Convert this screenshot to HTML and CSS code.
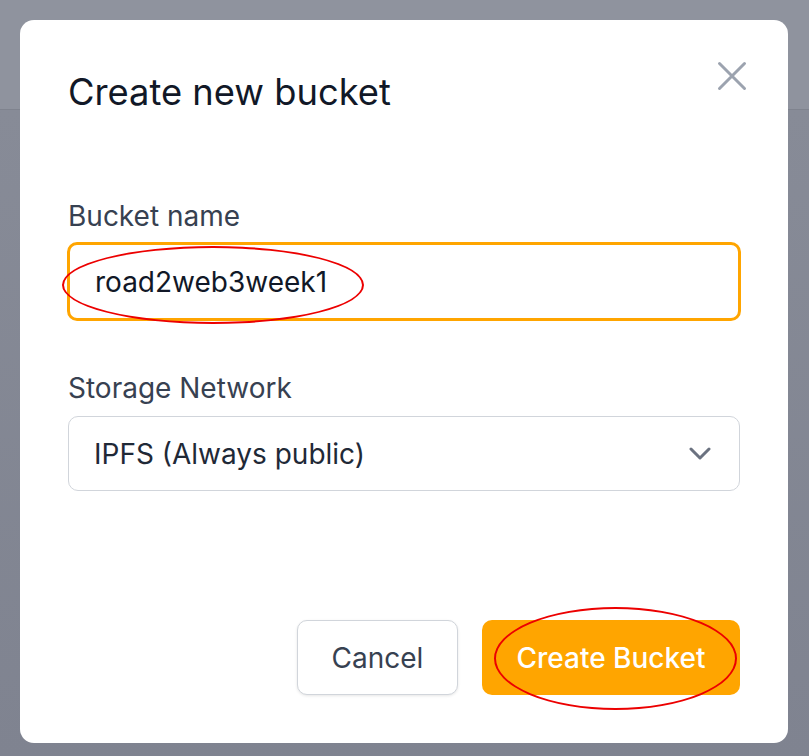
FILE: index.html
```html
<!DOCTYPE html>
<html>
<head>
<meta charset="utf-8">
<link rel="stylesheet" href="styles.css">
</head>
<body>
<div class="backdrop">
  <div class="bg-header"></div>
  <div class="bg-main"></div>
</div>
<div class="overlay">
  <div class="modal">
    <div class="modal-head">
      <h2 class="title">Create new bucket</h2>
      <button class="close" aria-label="Close">
        <svg width="30" height="30" viewBox="0 0 30 30"><path d="M2.5 2.5 L27.5 27.5 M27.5 2.5 L2.5 27.5" stroke="#9ca3af" stroke-width="3" stroke-linecap="round" fill="none"/></svg>
      </button>
    </div>
    <div class="field field-name">
      <label class="label">Bucket name</label>
      <div class="input input-focus">road2web3week1
        <span class="mark mark-input"></span>
      </div>
    </div>
    <div class="field field-net">
      <label class="label">Storage Network</label>
      <div class="input select">
        <span>IPFS (Always public)</span>
        <svg width="22" height="14" viewBox="0 0 22 14"><path d="M2 2 L11 11 L20 2" stroke="#6b7280" stroke-width="3" stroke-linecap="round" stroke-linejoin="round" fill="none"/></svg>
      </div>
    </div>
    <div class="actions">
      <button class="btn btn-cancel">Cancel</button>
      <button class="btn btn-create">Create Bucket<span class="mark mark-btn"></span></button>
    </div>
  </div>
</div>
</body>
</html>
```
FILE: styles.css
```css
* { box-sizing: border-box; }
html, body { margin: 0; padding: 0; }
body {
  width: 809px;
  height: 756px;
  overflow: hidden;
  font-family: Inter, "Noto Sans", sans-serif;
  background: #878b97;
}
.backdrop { display: flex; flex-direction: column; height: 100%; }
.bg-header { height: 110px; background: #8f939e; border-bottom: 1px solid #7f838e; }
.bg-main { flex: 1; background: linear-gradient(#878b97, #7f8390); }
.overlay {
  position: fixed;
  inset: 0;
  padding: 20px 21px 13px 20px;
  display: flex;
}
.modal {
  flex: 1;
  background: #fff;
  border-radius: 14px;
  padding: 0 48px 0 48px;
  display: flex;
  flex-direction: column;
}
.modal-head {
  display: flex;
  justify-content: space-between;
  align-items: flex-start;
  padding-top: 50px;
}
.title {
  margin: 0;
  font-size: 36.3px;
  font-weight: 400;
  line-height: 44px;
  color: #111827;
}
.close {
  border: 0; background: none; padding: 0;
  margin-top: -9px; margin-right: -7px;
  display: flex;
}
.field { display: flex; flex-direction: column; }
.field-name { margin-top: 84px; }
.field-net { margin-top: 49px; }
.label {
  font-size: 28px;
  line-height: 36px;
  color: #374151;
  margin-bottom: 10px;
}
.input {
  position: relative;
  height: 75px;
  border: 1.5px solid #d1d5db;
  border-radius: 10px;
  display: flex;
  align-items: center;
  padding: 0 25px;
  font-size: 28px;
  color: #111827;
}
.input-focus {
  border: 3px solid #ffa500;
  height: 79px;
  margin: -2px -1px 0 -1px;
}
.select { justify-content: space-between; padding-right: 28px; color: #1f2937; }
.actions {
  margin-top: auto;
  margin-bottom: 48px;
  display: flex;
  justify-content: flex-end;
  gap: 24px;
}
.btn {
  position: relative;
  height: 75px;
  border-radius: 10px;
  font-family: Inter, "Noto Sans", sans-serif;
  font-size: 28px;
}
.btn-cancel {
  width: 161px;
  background: #fff;
  border: 1.5px solid #d1d5db;
  color: #374151;
  box-shadow: 0 1px 3px rgba(0,0,0,0.1);
}
.btn-create {
  width: 258px;
  background: #ffa500;
  border: 0;
  color: #fff;
  font-weight: 500;
}
.mark {
  position: absolute;
  border: 2.5px solid #ec0000;
  border-radius: 50%;
  pointer-events: none;
}
.mark-input { left: -8px; top: 1px; width: 302px; height: 78px; }
.mark-btn { left: 12px; top: -13px; width: 243px; height: 103px; }
```
